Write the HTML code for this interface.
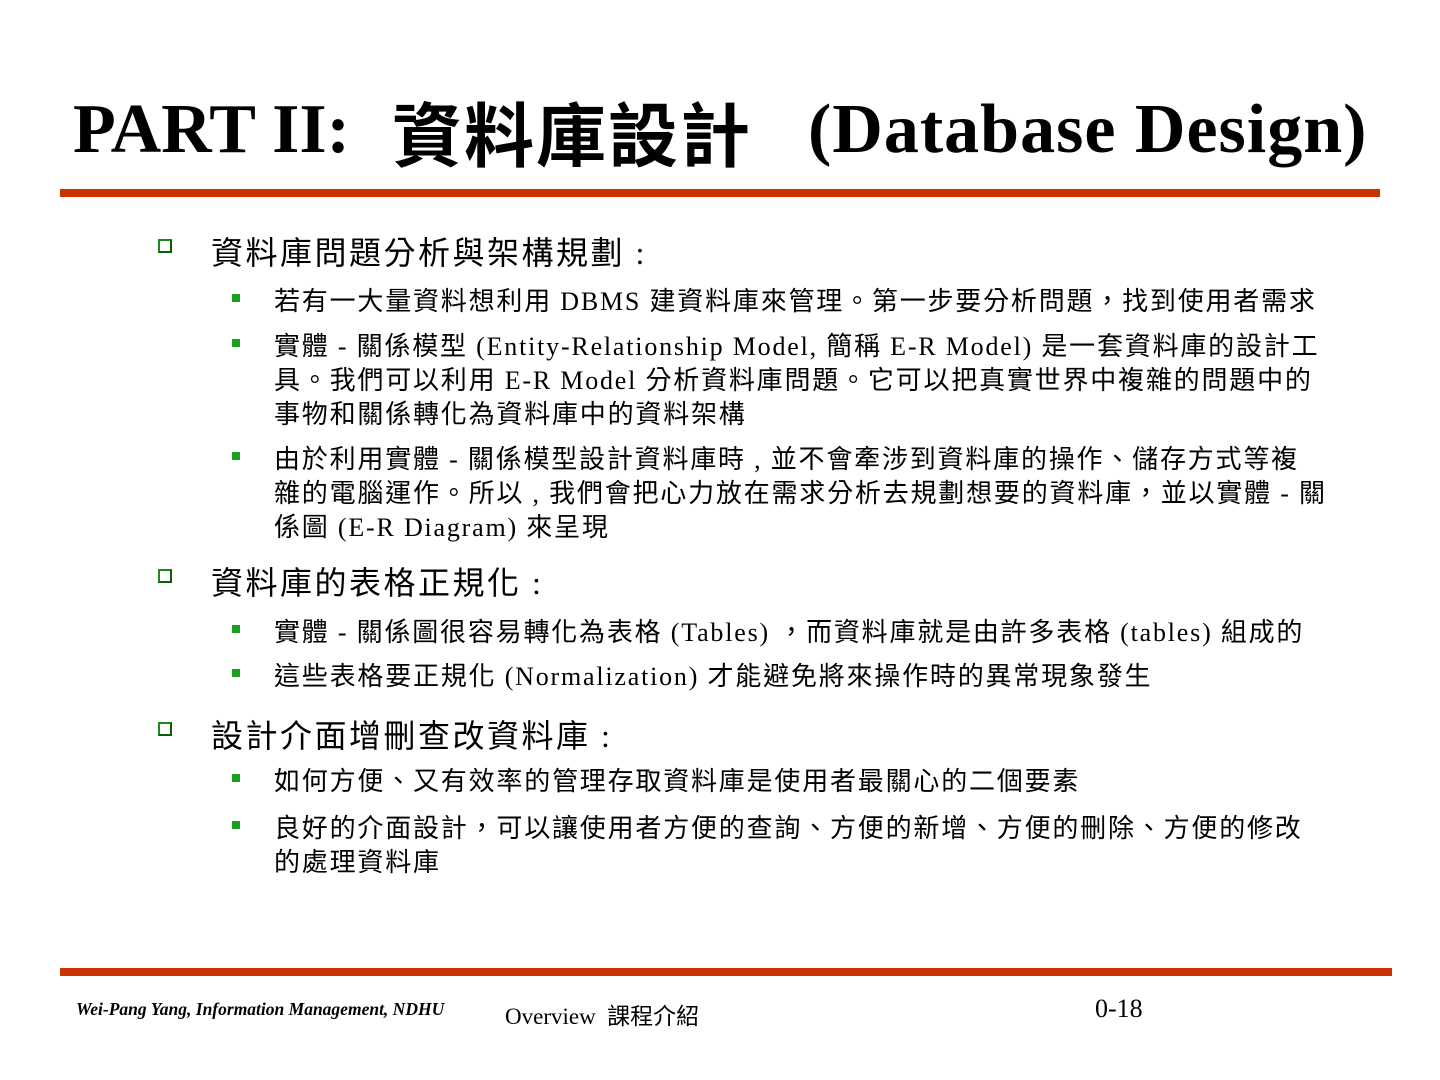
<!DOCTYPE html>
<html><head><meta charset="utf-8"><style>
body{margin:0;width:1440px;height:1080px;background:#fff;position:relative;overflow:hidden;font-family:"Liberation Serif","Noto Sans CJK TC",serif;color:#000}
.a{position:absolute;white-space:nowrap}
.t{font-weight:bold;font-size:70px;line-height:80px}
.l1{font-size:32px;line-height:40px;letter-spacing:2.5px;left:211px}
.l2{font-size:26px;line-height:34px;letter-spacing:1.8px;left:274px}
.b1{position:absolute;left:158px;width:14px;height:14px;border:2px solid #1a8a1a;border-right-color:#0d5a0d;border-bottom-color:#0d5a0d;box-sizing:border-box;background:#fff}
.b2{position:absolute;left:232px;width:8px;height:8px;background:#1aa01a}
.bar{position:absolute;background:#cc3300}
</style></head><body>
<div class="a t" style="left:73px;top:90px">PART II:</div>
<div class="a t" style="left:392px;top:92px;font-family:'Noto Sans CJK TC',sans-serif;font-size:70px;letter-spacing:2px">資料庫設計</div>
<div class="a t" style="left:808px;top:90px;letter-spacing:1px">(Database Design)</div>
<div class="bar" style="left:60px;top:189px;width:1320px;height:8px"></div>

<div class="b1" style="top:239px"></div>
<div class="a l1" style="top:233px">資料庫問題分析與架構規劃 :</div>
<div class="b2" style="top:294px"></div>
<div class="a l2" style="top:285px">若有一大量資料想利用 DBMS 建資料庫來管理。第一步要分析問題，找到使用者需求</div>
<div class="b2" style="top:339px"></div>
<div class="a l2" style="top:330px">實體 - 關係模型 (Entity-Relationship Model, 簡稱 E-R Model) 是一套資料庫的設計工</div>
<div class="a l2" style="top:364px">具。我們可以利用 E-R Model 分析資料庫問題。它可以把真實世界中複雜的問題中的</div>
<div class="a l2" style="top:398px">事物和關係轉化為資料庫中的資料架構</div>
<div class="b2" style="top:452px"></div>
<div class="a l2" style="top:443px">由於利用實體 - 關係模型設計資料庫時 , 並不會牽涉到資料庫的操作、儲存方式等複</div>
<div class="a l2" style="top:477px">雜的電腦運作。所以 , 我們會把心力放在需求分析去規劃想要的資料庫，並以實體 - 關</div>
<div class="a l2" style="top:511px">係圖 (E-R Diagram) 來呈現</div>

<div class="b1" style="top:569px"></div>
<div class="a l1" style="top:563px">資料庫的表格正規化 :</div>
<div class="b2" style="top:625px"></div>
<div class="a l2" style="top:616px">實體 - 關係圖很容易轉化為表格 (Tables) ，而資料庫就是由許多表格 (tables) 組成的</div>
<div class="b2" style="top:669px"></div>
<div class="a l2" style="top:660px">這些表格要正規化 (Normalization) 才能避免將來操作時的異常現象發生</div>

<div class="b1" style="top:722px"></div>
<div class="a l1" style="top:716px">設計介面增刪查改資料庫 :</div>
<div class="b2" style="top:774px"></div>
<div class="a l2" style="top:765px">如何方便、又有效率的管理存取資料庫是使用者最關心的二個要素</div>
<div class="b2" style="top:821px"></div>
<div class="a l2" style="top:812px">良好的介面設計，可以讓使用者方便的查詢、方便的新增、方便的刪除、方便的修改</div>
<div class="a l2" style="top:846px">的處理資料庫</div>

<div class="bar" style="left:60px;top:968px;width:1332px;height:8px"></div>
<div class="a" style="left:76px;top:999px;font-size:17.5px;font-weight:bold;font-style:italic">Wei-Pang Yang, Information Management, NDHU</div>
<div class="a" style="left:505px;top:997px;font-size:23px">Overview&nbsp; 課程介紹</div>
<div class="a" style="left:1095px;top:994px;font-size:26px">0-18</div>
</body></html>
